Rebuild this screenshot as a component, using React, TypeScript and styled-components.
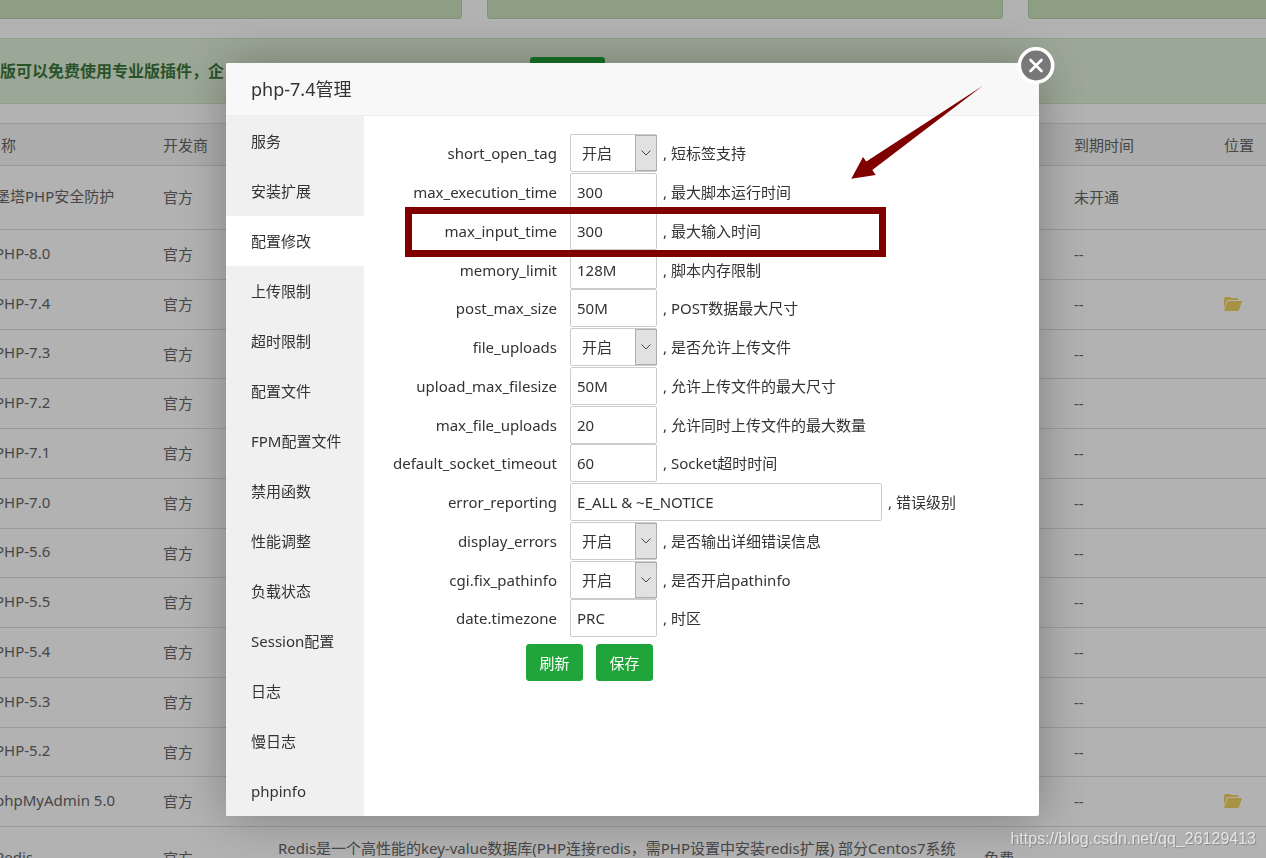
import React from "react";
import styled, { createGlobalStyle, css } from "styled-components";

const GlobalStyle = createGlobalStyle`
  * { box-sizing: border-box; }
  html, body, #root { height: 100%; }
  body {
    margin: 0;
    overflow: hidden;
    background: #fff;
    color: #333;
    font: 15px/20px "Noto Sans", "Noto Sans CJK SC", sans-serif;
  }
  button, input, select { font: inherit; color: inherit; }
`;

const Page = styled.main`
  height: 100%;
  overflow: hidden;
`;

const CardRow = styled.div`
  display: grid;
  grid-template-columns: 231fr 258fr 119fr;
  gap: 25px;
`;

const Card = styled.div<{ $open?: "left" | "right" }>`
  height: 19px;
  background: #cbe3bd;
  border: 1px solid #bbd3a6;
  border-top: 0;
  border-radius: 0 0 4px 4px;
  ${(p) => p.$open === "left" && css`border-left: 0; border-bottom-left-radius: 0;`}
  ${(p) => p.$open === "right" && css`border-right: 0; border-bottom-right-radius: 0;`}
`;

const Notice = styled.section`
  display: flex;
  align-items: flex-start;
  height: 66px;
  margin: 19px 0;
  padding-top: 18px;
  overflow: hidden;
  background: #dff0d8;
  border: solid #d0e6c1;
  border-width: 1px 0;
  color: #3c763d;
`;

const NoticeText = styled.strong`
  flex: 0 0 530px;
  padding-top: 4px;
  font-size: 16px;
  white-space: nowrap;
`;

const Button = styled.button<{ $wide?: boolean }>`
  width: ${(p) => (p.$wide ? 75 : 57)}px;
  height: 37px;
  padding: 0;
  border: 1px solid #20a53a;
  border-radius: 3px;
  background: #20a53a;
  color: #fff;
`;

const Table = styled.table`
  width: 100%;
  table-layout: fixed;
  border-collapse: collapse;
  border-top: 1px solid #ddd;
  color: #666;
`;

const HeadCell = styled.th`
  height: 42px;
  padding: 1px 8px 0;
  border-bottom: 1px solid #ddd;
  background: #f6f6f6;
  font-weight: 400;
  text-align: left;
  white-space: nowrap;
  &:first-child { padding-left: 1px; }
`;

const Row = styled.tr<{ $tall?: boolean }>`
  height: ${(p) => (p.$tall ? 64 : 50)}px;
  &:nth-child(4n) { height: 49px; }
`;

const Cell = styled.td<{ $top?: boolean }>`
  padding: 0 8px 1px;
  border-bottom: 1px solid #ddd;
  white-space: nowrap;
  ${(p) => p.$top && css`padding-top: 11px; vertical-align: top;`}
  &:first-child { padding: 0 0 4px; text-indent: -5px; }
`;

const FolderIcon = styled.svg`
  display: block;
  width: 18px;
  height: 16px;
  fill: #f0d264;
`;

const Overlay = styled.div`
  position: fixed;
  inset: 0;
  display: flex;
  justify-content: center;
  align-items: flex-start;
  padding: 63px 1px 0 0;
  background: rgba(0, 0, 0, 0.3);
`;

const Dialog = styled.section`
  position: relative;
  width: 813px;
  border-radius: 2px;
  background: #fff;
  box-shadow: 1px 1px 50px rgba(0, 0, 0, 0.3);
`;

const DialogTitle = styled.h1`
  margin: 0;
  padding: 13px 25px;
  border-bottom: 1px solid #eee;
  border-radius: 2px 2px 0 0;
  background: #f8f8f8;
  font-size: 18px;
  font-weight: 400;
  line-height: 26px;
`;

const CloseButton = styled.button`
  position: absolute;
  top: -17px;
  right: -16px;
  width: 38px;
  height: 38px;
  padding: 0;
  border: 0;
  background: none;
  svg { display: block; }
`;

const DialogBody = styled.div`
  display: flex;
`;

const Side = styled.nav`
  display: flex;
  flex-direction: column;
  width: 138px;
  background: #f0f0f0;
`;

const SideLink = styled.a<{ $active?: boolean }>`
  height: 50px;
  padding-left: 25px;
  line-height: 50px;
  color: inherit;
  text-decoration: none;
  background: ${(p) => (p.$active ? "#fff" : "transparent")};
`;

const Form = styled.form`
  flex: 1;
  padding-top: 18px;
`;

const Field = styled.div`
  display: flex;
  align-items: center;
  height: 38px;
  margin-bottom: 1px;
  &:nth-child(4n) { margin-bottom: 0; }
`;

const Label = styled.label`
  width: 193px;
  margin-right: 13px;
  text-align: right;
`;

const control = css`
  height: 38px;
  border: 1px solid #ccc;
  border-radius: 2px;
  background: #fff;
  outline: 0;
`;

const TextInput = styled.input<{ $wide?: boolean }>`
  ${control}
  width: ${(p) => (p.$wide ? 312 : 87)}px;
  padding: 0 6px;
`;

const SelectBox = styled.span`
  position: relative;
  width: 87px;
  height: 38px;
`;

const Select = styled.select`
  ${control}
  width: 100%;
  padding: 0 24px 0 11px;
  appearance: none;
`;

const SelectArrow = styled.span`
  position: absolute;
  top: 1px;
  right: 0;
  bottom: 1px;
  display: grid;
  place-items: center;
  width: 22px;
  border: 1px solid #adadad;
  background: #e1e1e1;
  pointer-events: none;
`;

const Hint = styled.span`
  margin-left: 6px;
  white-space: nowrap;
`;

const Actions = styled.div`
  display: flex;
  gap: 13px;
  padding: 6px 0 0 162px;
`;

const Highlight = styled.div`
  position: absolute;
  top: 144px;
  left: 179px;
  width: 481px;
  height: 50px;
  border: 7px solid #800000;
  pointer-events: none;
`;

const Arrow = styled.svg`
  position: absolute;
  top: 22px;
  left: 622px;
  pointer-events: none;
`;

const Watermark = styled.div`
  position: fixed;
  right: 10px;
  bottom: 9px;
  color: rgba(255, 255, 255, 0.7);
  font: 16px/20px "Liberation Sans", sans-serif;
  text-shadow: 1px 1px 1px rgba(0, 0, 0, 0.25);
`;

type FieldData = { name: string; hint: string; value?: string; wide?: boolean };

const fields: FieldData[] = [
  { name: "short_open_tag", hint: "短标签支持" },
  { name: "max_execution_time", value: "300", hint: "最大脚本运行时间" },
  { name: "max_input_time", value: "300", hint: "最大输入时间" },
  { name: "memory_limit", value: "128M", hint: "脚本内存限制" },
  { name: "post_max_size", value: "50M", hint: "POST数据最大尺寸" },
  { name: "file_uploads", hint: "是否允许上传文件" },
  { name: "upload_max_filesize", value: "50M", hint: "允许上传文件的最大尺寸" },
  { name: "max_file_uploads", value: "20", hint: "允许同时上传文件的最大数量" },
  { name: "default_socket_timeout", value: "60", hint: "Socket超时时间" },
  { name: "error_reporting", value: "E_ALL & ~E_NOTICE", hint: "错误级别", wide: true },
  { name: "display_errors", hint: "是否输出详细错误信息" },
  { name: "cgi.fix_pathinfo", hint: "是否开启pathinfo" },
  { name: "date.timezone", value: "PRC", hint: "时区" },
];

const menu = [
  "服务", "安装扩展", "配置修改", "上传限制", "超时限制", "配置文件", "FPM配置文件",
  "禁用函数", "性能调整", "负载状态", "Session配置", "日志", "慢日志", "phpinfo",
];

type Plugin = { name: string; expire: string; folder?: boolean; tall?: boolean; desc?: string; price?: string };

const plugins: Plugin[] = [
  { name: "堡塔PHP安全防护", expire: "未开通", tall: true },
  { name: "PHP-8.0", expire: "--" },
  { name: "PHP-7.4", expire: "--", folder: true },
  ...["7.3", "7.2", "7.1", "7.0", "5.6", "5.5", "5.4", "5.3", "5.2"].map((v) => ({ name: `PHP-${v}`, expire: "--" })),
  { name: "phpMyAdmin 5.0", expire: "--", folder: true },
  {
    name: "Redis",
    expire: "",
    tall: true,
    desc: "Redis是一个高性能的key-value数据库(PHP连接redis，需PHP设置中安装redis扩展) 部分Centos7系统",
    price: "免费",
  },
];

function ConfigField({ name, hint, value, wide }: FieldData) {
  return (
    <Field>
      <Label htmlFor={name}>{name}</Label>
      {value === undefined ? (
        <SelectBox>
          <Select id={name} defaultValue="on">
            <option value="on">开启</option>
            <option value="off">关闭</option>
          </Select>
          <SelectArrow>
            <svg width="12" height="8" viewBox="0 0 12 8" fill="none" stroke="#444">
              <path d="M1.5 1.5 6 6l4.500-4.500" />
            </svg>
          </SelectArrow>
        </SelectBox>
      ) : (
        <TextInput id={name} defaultValue={value} $wide={wide} />
      )}
      <Hint>, {hint}</Hint>
    </Field>
  );
}

export default function App() {
  return (
    <>
      <GlobalStyle />
      <Page>
        <CardRow>
          <Card $open="left" />
          <Card />
          <Card $open="right" />
        </CardRow>
        <Notice>
          <NoticeText>版可以免费使用专业版插件，企</NoticeText>
          <Button type="button" $wide aria-label="升级" />
        </Notice>
        <Table>
          <colgroup>
            <col style={{ width: 155 }} />
            <col style={{ width: 115 }} />
            <col />
            <col style={{ width: 90 }} />
            <col style={{ width: 150 }} />
            <col style={{ width: 50 }} />
          </colgroup>
          <thead>
            <tr>
              <HeadCell>称</HeadCell>
              <HeadCell>开发商</HeadCell>
              <HeadCell />
              <HeadCell />
              <HeadCell>到期时间</HeadCell>
              <HeadCell>位置</HeadCell>
            </tr>
          </thead>
          <tbody>
            {plugins.map((p) => (
              <Row key={p.name} $tall={p.tall}>
                <Cell>{p.name}</Cell>
                <Cell>官方</Cell>
                <Cell $top>{p.desc}</Cell>
                <Cell>{p.price}</Cell>
                <Cell>{p.expire}</Cell>
                <Cell>
                  {p.folder && (
                    <FolderIcon viewBox="0 0 18 16">
                      <path d="M0 12V2.500Q0 1 1.500 1H6q1 0 1.300 1H13q1.500 0 1.500 1.500V4H4.500Q3.200 4 2.600 5.200z" />
                      <path d="M4.500 5H18l-3 9q-.3 1-1.500 1H0L3.200 6Q3.600 5 4.500 5z" />
                    </FolderIcon>
                  )}
                </Cell>
              </Row>
            ))}
          </tbody>
        </Table>
      </Page>
      <Overlay>
        <Dialog role="dialog" aria-labelledby="dialog-title">
          <DialogTitle id="dialog-title">php-7.4管理</DialogTitle>
          <DialogBody>
            <Side>
              {menu.map((item) => (
                <SideLink key={item} href="#" $active={item === "配置修改"}>{item}</SideLink>
              ))}
            </Side>
            <Form>
              {fields.map((f) => <ConfigField key={f.name} {...f} />)}
              <Actions>
                <Button type="button">刷新</Button>
                <Button type="button">保存</Button>
              </Actions>
            </Form>
          </DialogBody>
          <CloseButton type="button" aria-label="关闭">
            <svg width="38" height="38" viewBox="0 0 38 38">
              <circle cx="19" cy="19.500" r="16.700" fill="#787878" stroke="#fff" strokeWidth="3.600" />
              <path d="M13.500 14l11 11m0-11l-11 11" stroke="#fff" strokeWidth="2.600" strokeLinecap="round" />
            </svg>
          </CloseButton>
          <Highlight />
          <Arrow width="136" height="98" viewBox="0 0 136 98" fill="#800000">
            <path d="M134.500 1 24.300 85l3.400 5-24.400 3.700L15 72l3.300 4.500z" />
          </Arrow>
        </Dialog>
      </Overlay>
      <Watermark>https://blog.csdn.net/qq_26129413</Watermark>
    </>
  );
}
